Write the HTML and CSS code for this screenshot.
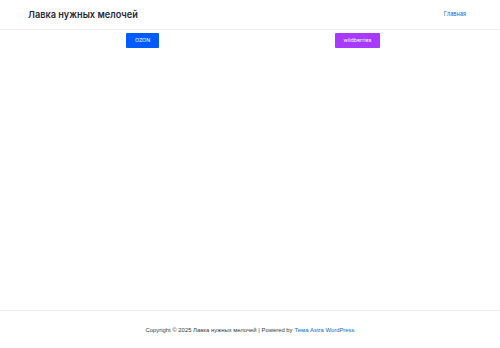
FILE: index.html
```html
<!DOCTYPE html>
<html lang="ru">
<head>
    <meta charset="UTF-8">
    <title>Лавка нужных мелочей</title>
    <link rel="stylesheet" href="styles.css">
</head>
<body>
    <div class="page">
        <header class="site-header">
            <a class="site-title" href="#">Лавка нужных мелочей</a>
            <nav class="main-nav">
                <a href="#">Главная</a>
            </nav>
        </header>

        <main class="content">
            <div class="shop-col">
                <a class="shop-btn ozon" href="#">OZON</a>
            </div>
            <div class="shop-col">
                <a class="shop-btn wb" href="#">wildberries</a>
            </div>
        </main>

        <footer class="site-footer">
            Copyright © 2025 Лавка нужных мелочей | Powered by <a href="#">Тема Astra WordPress</a>
        </footer>
    </div>
</body>
</html>
```

FILE: styles.css
```css
html, body {
    height: 100%;
}
body {
    margin: 0;
    font-family: Inter, 'Liberation Sans', Arial, sans-serif;
    background-color: #ffffff;
    color: #334155;
}
a {
    text-decoration: none;
}

.page {
    min-height: 100%;
    display: flex;
    flex-direction: column;
}

.site-header {
    display: flex;
    justify-content: space-between;
    align-items: center;
    height: 29px;
    padding: 0 34px 0 28px;
    border-bottom: 1px solid #eaecef;
}
.site-title {
    font-size: 9.2px;
    line-height: 1;
    font-weight: 600;
    color: #1e293b;
}
.main-nav {
    font-size: 5.6px;
    line-height: 1;
}
.main-nav a {
    color: #046bd2;
}

.content {
    flex: 1;
    display: flex;
    justify-content: center;
    align-items: flex-start;
    padding-top: 3px;
}
.shop-col {
    width: 215px;
    display: flex;
    justify-content: center;
}
.shop-btn {
    display: inline-block;
    height: 15px;
    line-height: 15px;
    font-size: 5.3px;
    color: #ffffff;
    border-radius: 1px;
}
.ozon {
    background-color: #005bff;
    padding: 0 9px;
}
.wb {
    background-color: #a73afd;
    padding: 0 8.5px;
}

.site-footer {
    height: 37px;
    border-top: 1px solid #eaecef;
    display: flex;
    justify-content: center;
    align-items: center;
    font-family: 'Liberation Sans', Arial, sans-serif;
    font-size: 5.9px;
    color: #3a3a3a;
}
.site-footer a {
    color: #046bd2;
    margin-left: 2px;
}
```
